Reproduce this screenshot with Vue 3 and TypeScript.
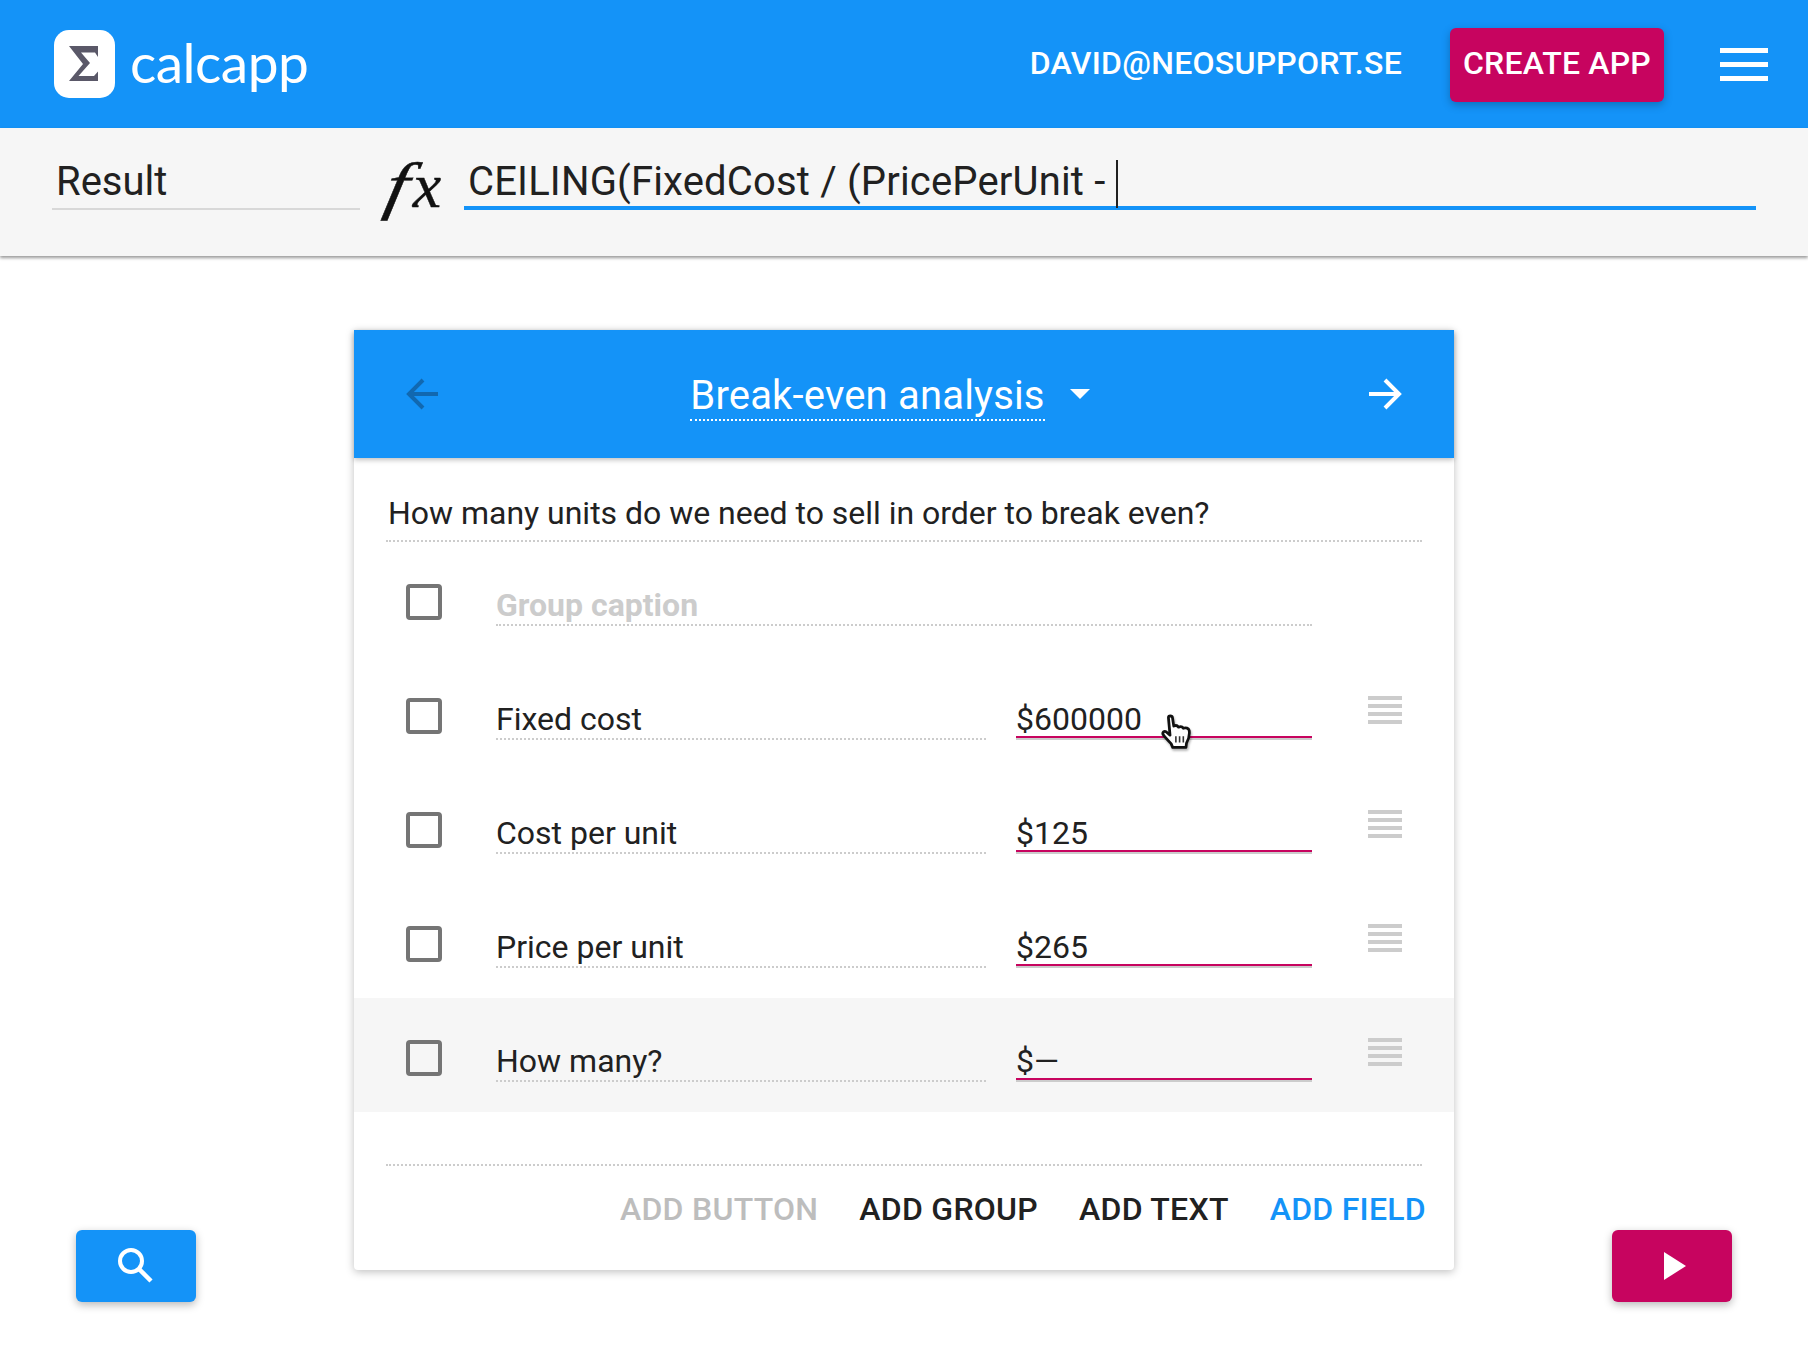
<script setup lang="ts">
interface Field { label: string; value: string; active?: boolean }
const fields: Field[] = [
  { label: 'Fixed cost', value: '$600000' },
  { label: 'Cost per unit', value: '$125' },
  { label: 'Price per unit', value: '$265' },
  { label: 'How many?', value: '$—', active: true },
]
</script>

<template>
  <div class="page">
    <header class="topbar">
      <div class="brand">
        <span class="logo">
          <svg width="61" height="68" viewBox="0 0 61 68"><path d="M15 16H44V27L41 22.500H27L36 33L24.500 46H40L44 41.500V51H15L29 34Z" fill="#5a5868"/></svg>
        </span>
        <span class="brand-name">calcapp</span>
      </div>
      <div class="top-actions">
        <span class="email">DAVID@NEOSUPPORT.SE</span>
        <button class="create">CREATE APP</button>
        <span class="burger"><i></i><i></i><i></i></span>
      </div>
    </header>

    <section class="formula-bar">
      <div class="name-field">Result</div>
      <span class="fx"><span class="fx-f">f</span>x</span>
      <div class="formula-field">CEILING(FixedCost / (PricePerUnit -<span class="caret"></span></div>
    </section>

    <main class="main">
      <div class="card">
        <div class="card-head">
          <svg class="nav" width="34" height="32" viewBox="0 0 34 32"><path d="M32 16H4M17 2L3 16L17 30" fill="none" stroke="#1168b0" stroke-width="4"/></svg>
          <div class="title-wrap">
            <span class="title">Break-even analysis</span>
            <span class="tri"></span>
          </div>
          <svg class="nav" width="34" height="32" viewBox="0 0 34 32"><path d="M1 16H30M17 2L31 16L17 30" fill="none" stroke="#fff" stroke-width="4"/></svg>
        </div>

        <div class="question"><span>How many units do we need to sell in order to break even?</span></div>

        <div class="row group">
          <span class="check"></span>
          <div class="caption">Group caption</div>
        </div>
        <div v-for="(f, i) in fields" :key="f.label" class="row" :class="{ active: f.active }">
          <span class="check"></span>
          <div class="label">{{ f.label }}</div>
          <div class="value">
            {{ f.value }}
            <svg v-if="i === 0" class="hand" width="34" height="40" viewBox="0 0 32 36">
              <path d="M7 3.500C7 1.500 10.500 1.500 10.800 3.500L12 11.500C14 10.500 15.500 11 16.500 12.500C18.500 11.500 20 12 21 13.500C23.500 12.500 26 13.500 26.500 15.500C27 18.500 26.500 23 24 27.500L23.500 31.500H11L9.500 28C7 25.500 4 22.500 2 19.500C1 17.500 3 15.500 5 17L8.500 20Z" fill="#fff" stroke="#111" stroke-width="2.600" stroke-linejoin="round"/>
              <path d="M14 21V27M17.500 21V27M21 21V27" stroke="#333" stroke-width="1.500"/>
            </svg>
          </div>
          <span class="handle"><i></i><i></i><i></i><i></i></span>
        </div>

        <div class="actions">
          <span class="action muted">ADD BUTTON</span>
          <span class="action">ADD GROUP</span>
          <span class="action">ADD TEXT</span>
          <span class="action primary">ADD FIELD</span>
        </div>
      </div>
    </main>

    <button class="fab search" aria-label="Search">
      <svg width="36" height="36" viewBox="0 0 36 36"><circle cx="13" cy="13" r="11" fill="none" stroke="#fff" stroke-width="4"/><path d="M21 21L33 33" stroke="#fff" stroke-width="4.500"/></svg>
    </button>
    <button class="fab play" aria-label="Run">
      <svg class="play-icon" width="24" height="28" viewBox="0 0 24 28"><path d="M1 0L23 14L1 28Z" fill="#fff"/></svg>
    </button>
  </div>
</template>

<style>
html, body { margin: 0; background: #fff; }
</style>

<style scoped>
.page {
  position: relative;
  width: 1808px;
  height: 1364px;
  overflow: hidden;
  font-family: Roboto, sans-serif;
  color: #212121;
  background: #fff;
}
.topbar {
  height: 128px;
  box-sizing: border-box;
  padding: 0 40px 0 54px;
  background: #1493f8;
  display: flex;
  align-items: center;
  justify-content: space-between;
}
.brand { display: flex; align-items: center; gap: 15px; }
.logo {
  width: 61px;
  height: 68px;
  border-radius: 15px;
  background: #fff;
  display: block;
}
.logo svg { display: block; }
.brand-name {
  font-family: Lato, sans-serif;
  font-weight: 400;
  font-size: 55px;
  line-height: 68px;
  margin-top: -5px;
  color: #fff;
  letter-spacing: -0.5px;
}
.top-actions { display: flex; align-items: center; }
.email {
  color: #fff;
  font-size: 32px;
  font-weight: 500;
  letter-spacing: 0.27px;
  margin: -2px 48px 0 0;
}
.create {
  width: 214px;
  height: 74px;
  border: 0;
  border-radius: 6px;
  padding: 0 0 4px;
  background: #c7045f;
  color: #fff;
  font: 500 32px Roboto, sans-serif;
  letter-spacing: 0.2px;
  box-shadow: 0 3px 8px rgba(0, 0, 0, 0.25);
  margin: 2px 56px 0 0;
}
.burger { width: 48px; display: flex; flex-direction: column; gap: 9px; }
.burger i { display: block; height: 5px; background: #fff; }

.formula-bar {
  position: relative;
  height: 128px;
  box-sizing: border-box;
  padding-left: 52px;
  padding-right: 52px;
  background: #f6f6f6;
  box-shadow: 0 2px 3px rgba(0, 0, 0, 0.4);
  display: flex;
  align-items: flex-start;
}
.name-field {
  width: 308px;
  height: 82px;
  box-sizing: border-box;
  padding: 30px 0 0 4px;
  font-size: 40px;
  line-height: 47px;
  border-bottom: 2px solid #d8d8d8;
}
.fx {
  width: 104px;
  padding-left: 22px;
  box-sizing: border-box;
  font-family: "Liberation Serif", serif;
  font-style: italic;
  font-size: 64px;
  line-height: 74px;
  margin-top: 21px;
  color: #111;
  -webkit-text-stroke: 0.4px #111;
}
.fx-f {
  display: inline-block;
  transform: scaleX(1.25) skewX(-9deg);
  transform-origin: left 68%;
  margin-left: 2px;
  margin-right: 11px;
}
.formula-field {
  flex: 1;
  height: 82px;
  box-sizing: border-box;
  padding: 30px 0 0 4px;
  font-size: 40px;
  line-height: 47px;
  letter-spacing: 0.17px;
  border-bottom: 4px solid #1493f8;
  display: flex;
  white-space: pre;
}
.caret {
  width: 2px;
  height: 48px;
  margin: 2px 0 0 11px;
  background: #212121;
}

.main { display: flex; justify-content: center; padding-top: 74px; }
.card {
  width: 1100px;
  height: 940px;
  border-radius: 0 0 4px 4px;
  background: #fff;
  box-shadow: 0 2px 8px rgba(0, 0, 0, 0.25);
}
.card-head {
  height: 128px;
  box-sizing: border-box;
  padding: 0 52px 0 52px;
  background: #1493f8;
  box-shadow: 0 2px 5px rgba(0, 0, 0, 0.25);
  display: flex;
  align-items: center;
  justify-content: space-between;
}
.nav { display: block; }
.title-wrap { display: flex; align-items: center; color: #fff; padding-right: 28px; }
.title {
  font-size: 40px;
  line-height: 47px;
  letter-spacing: 0.18px;
  padding-bottom: 0;
  border-bottom: 2px dotted #fff;
  margin-top: 4px;
}
.tri {
  width: 0;
  height: 0;
  margin-left: 25px;
  border-left: 10px solid transparent;
  border-right: 10px solid transparent;
  border-top: 10px solid #fff;
}
.question {
  height: 84px;
  box-sizing: border-box;
  padding: 0 32px;
  font-size: 32px;
}
.question span {
  display: block;
  height: 84px;
  box-sizing: border-box;
  padding: 36px 0 0 2px;
  line-height: 38px;
  letter-spacing: -0.02px;
  border-bottom: 2px dotted #ccc;
}
.row {
  position: relative;
  height: 114px;
  box-sizing: border-box;
  padding: 42px 52px 0;
  display: grid;
  grid-template-columns: 36px 490px 296px 34px;
  column-gap: 0;
  font-size: 32px;
}
.row.active { background: #f6f6f6; }
.check {
  display: block;
  width: 36px;
  height: 36px;
  box-sizing: border-box;
  border: 4px solid #757575;
  border-radius: 4px;
  grid-column: 1;
}
.label, .caption {
  margin-left: 54px;
  height: 42px;
  line-height: 46px;
  border-bottom: 2px dotted #ccc;
  box-sizing: content-box;
  margin-top: -2px;
}
.label { width: 490px; }
.caption {
  grid-column: 2 / 4;
  width: 816px;
  font-weight: 700;
  color: #ccc;
}
.value {
  position: relative;
  margin-left: 84px;
  width: 296px;
  height: 40px;
  margin-top: -2px;
  line-height: 46px;
  box-sizing: content-box;
  border-bottom: 2px solid #c7045f;
  box-shadow: 0 2px 0 #ccc;
}
.hand {
  position: absolute;
  left: 145px;
  top: 17px;
  filter: drop-shadow(1px 2px 1px rgba(0, 0, 0, 0.3));
}
.handle {
  margin-left: 140px;
  margin-top: -2px;
  width: 34px;
  display: flex;
  flex-direction: column;
  gap: 4px;
}
.handle i { display: block; height: 4px; background: #ccc; }
.actions {
  margin: 52px 32px 0;
  border-top: 2px dotted #ccc;
  padding: 24px 0 0;
  display: flex;
  justify-content: flex-end;
  gap: 41px;
  font-size: 32px;
  font-weight: 500;
  line-height: 38px;
  letter-spacing: 0.27px;
}
.action.muted { color: #bdbdbd; }
.action.primary { color: #1493f8; margin-right: -4px; }
.fab {
  position: absolute;
  top: 1230px;
  width: 120px;
  height: 72px;
  border: 0;
  padding: 0;
  border-radius: 6px;
  box-shadow: 0 3px 8px rgba(0, 0, 0, 0.28);
  display: flex;
  align-items: center;
  justify-content: center;
}
.fab.search { left: 76px; background: #1493f8; }
.fab.play { left: 1612px; background: #c7045f; }
.play-icon { margin-left: 6px; }
</style>
